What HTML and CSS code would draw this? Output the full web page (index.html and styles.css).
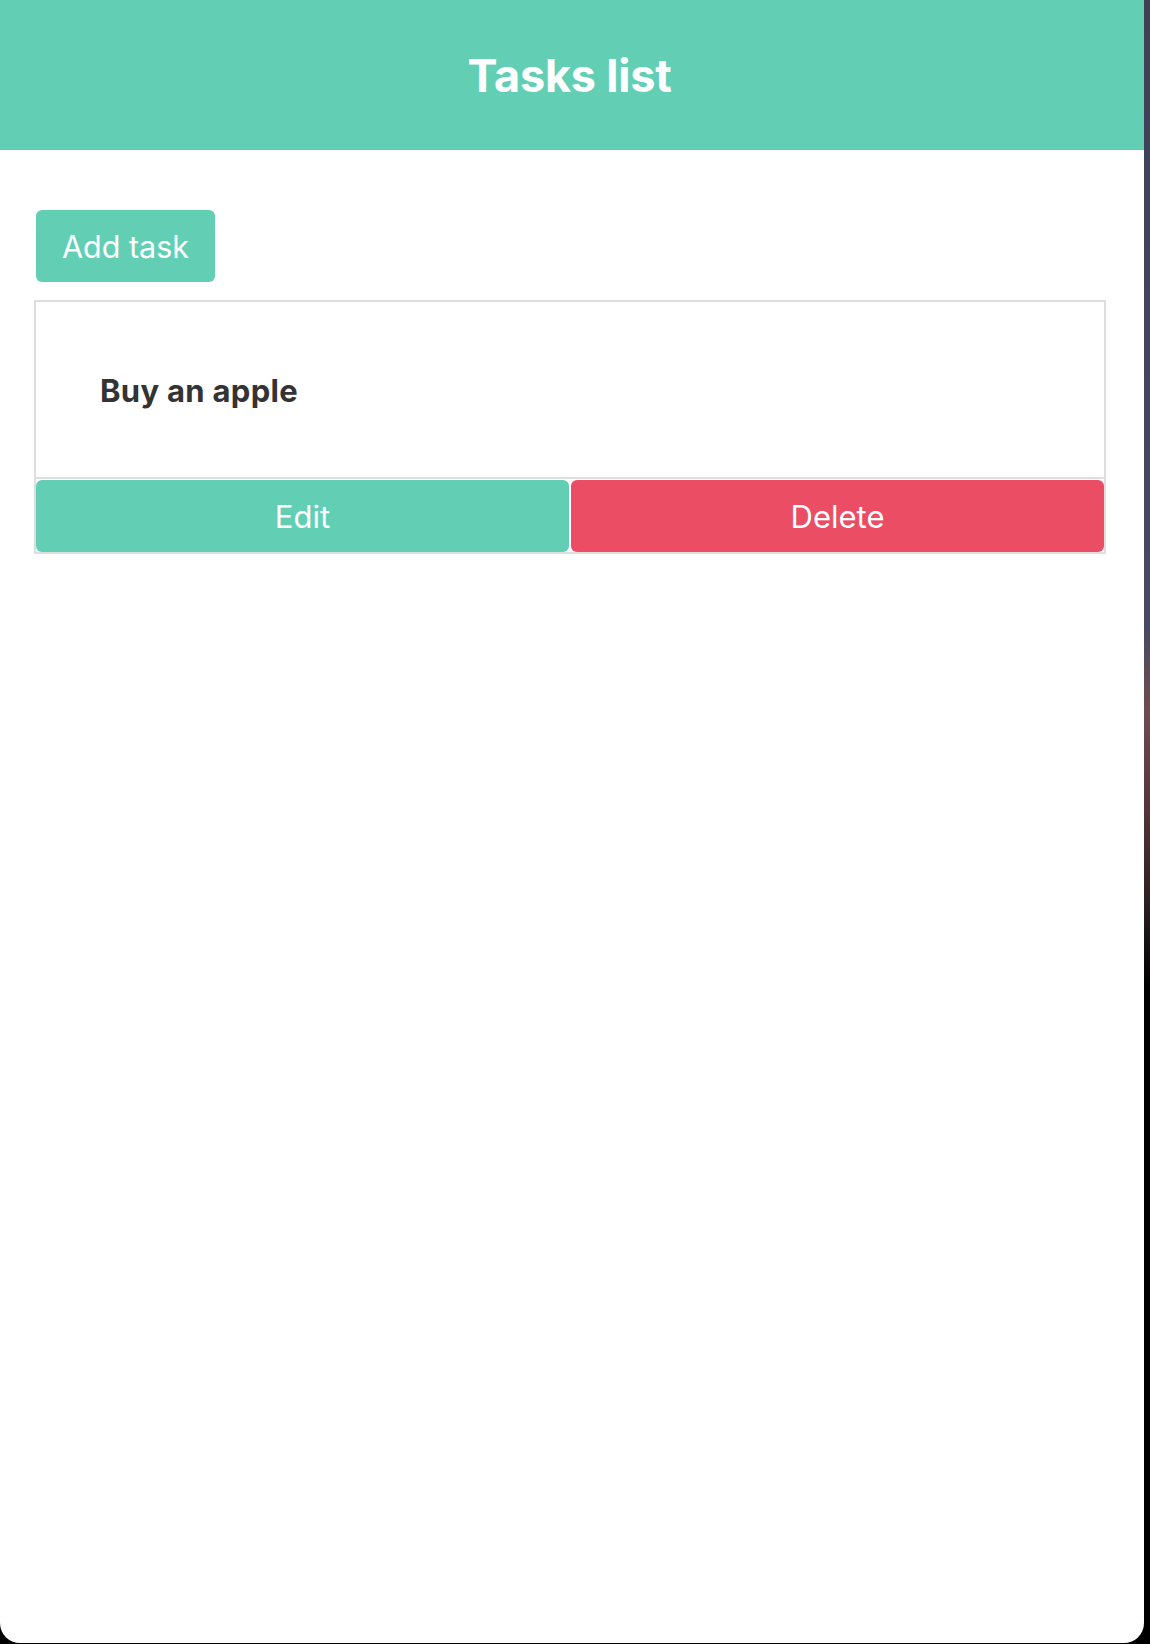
FILE: index.html
```html
<!DOCTYPE html>
<html lang="en">
<head>
<meta charset="utf-8">
<title>Tasks list</title>
<link rel="stylesheet" href="styles.css">
</head>
<body>
<div class="app">
  <header class="header">
    <h1 class="title">Tasks list</h1>
  </header>
  <main class="main">
    <button class="btn btn-add">Add task</button>
    <div class="card">
      <div class="card-body">
        <span class="task-name">Buy an apple</span>
      </div>
      <div class="card-actions">
        <button class="btn btn-edit">Edit</button>
        <button class="btn btn-delete">Delete</button>
      </div>
    </div>
  </main>
</div>
</body>
</html>
```
FILE: styles.css
```css
* { box-sizing: border-box; }
html, body { margin: 0; padding: 0; }
body {
  width: 1150px;
  height: 1644px;
  overflow: hidden;
  font-family: Inter, "Noto Sans", "Liberation Sans", sans-serif;
  background: linear-gradient(to bottom, #3c4156 0%, #464a62 38%, #6e4c50 43%, #5a3a3d 48%, #2a1f22 55%, #000 60%, #000 100%);
}
.app {
  width: 1144px;
  height: 1643px;
  background: #fff;
  border-radius: 0 0 20px 20px;
  overflow: hidden;
}
.header {
  height: 150px;
  background: #62cfb5;
  display: flex;
  align-items: center;
  justify-content: center;
  padding-right: 5px;
}
.title {
  margin: 0;
  color: #fff;
  font-size: 45px;
  font-weight: 700;
  letter-spacing: -0.2px;
}
.main {
  padding: 60px 38px 0 34px;
}
.btn {
  border: none;
  font-family: inherit;
  color: #fff;
  border-radius: 6px;
  cursor: pointer;
}
.btn-add {
  display: block;
  margin: 0 0 18px 2px;
  width: 179px;
  height: 72px;
  background: #62cfb5;
  font-size: 30.5px;
  font-weight: 400;
  padding: 0;
}
.card {
  border: 2px solid #dedede;
}
.card-body {
  height: 177px;
  display: flex;
  align-items: center;
  padding: 2px 0 0 64px;
  border-bottom: 2px solid #dedede;
}
.task-name {
  font-size: 31px;
  font-weight: 700;
  letter-spacing: 0.3px;
  color: #333;
}
.card-actions {
  display: flex;
  gap: 2px;
  padding-top: 1px;
}
.card-actions .btn {
  flex: 1;
  height: 72px;
  font-size: 31px;
  font-weight: 400;
  padding: 0;
}
.btn-edit { background: #62cfb5; }
.btn-delete { background: #eb4d65; }
```
